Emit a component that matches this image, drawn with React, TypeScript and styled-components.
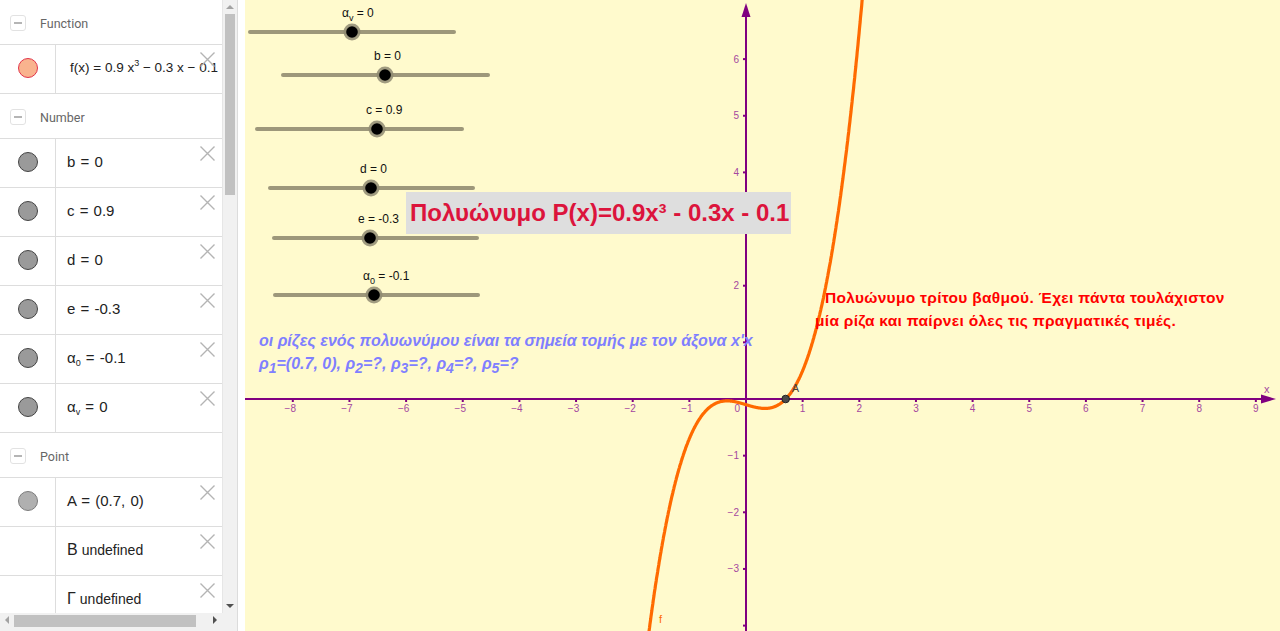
import React from 'react';
import styled, { createGlobalStyle } from 'styled-components';

const U = 56.65;
const OX = 501;
const OY = 399;
const gx = (x: number) => OX + x * U;
const gy = (y: number) => OY - y * U;
const f = (x: number) => 0.9 * x * x * x - 0.3 * x - 0.1;

const curvePath = (() => {
  const pts: string[] = [];
  for (let i = 0; i <= 600; i++) {
    const x = -1.8 + (i * 3.9) / 600;
    const y = gy(f(x));
    if (y < -40 || y > 680) continue;
    pts.push(`${gx(x).toFixed(1)},${y.toFixed(1)}`);
  }
  return 'M' + pts.join(' L');
})();

const sliders = [
  { name: 'α', sub: 'v', value: '0', y: 32, x1: 5, x2: 209, knob: 107, labelX: 97 },
  { name: 'b', value: '0', y: 75, x1: 38, x2: 243, knob: 140, labelX: 129 },
  { name: 'c', value: '0.9', y: 129, x1: 12, x2: 217, knob: 132, labelX: 121 },
  { name: 'd', value: '0', y: 188, x1: 25, x2: 228, knob: 126, labelX: 115 },
  { name: 'e', value: '-0.3', y: 238, x1: 29, x2: 232, knob: 125, labelX: 113 },
  { name: 'α', sub: '0', value: '-0.1', y: 295, x1: 30, x2: 233, knob: 129, labelX: 118 },
];

const numbers = [
  { name: 'b', value: '0' },
  { name: 'c', value: '0.9' },
  { name: 'd', value: '0' },
  { name: 'e', value: '-0.3' },
  { name: 'α', sub: '0', value: '-0.1' },
  { name: 'α', sub: 'v', value: '0' },
];

const GlobalStyle = createGlobalStyle`
  html, body { margin: 0; padding: 0; background: #fff; overflow: hidden; }
  body { font-family: "Liberation Sans", Arial, sans-serif; }
`;

const Page = styled.div`
  display: flex;
  width: 1280px;
  height: 631px;
  overflow: hidden;
`;

const AlgebraPanel = styled.div`
  flex: none;
  width: 237px;
  height: 631px;
  display: grid;
  grid-template-columns: 222px 15px;
  grid-template-rows: 613px 18px;
  border-right: 1px solid #dcdcdc;
`;

const AlgebraList = styled.div`
  overflow: hidden;
`;

const GroupHeader = styled.div`
  height: 44px;
  display: flex;
  align-items: center;
  gap: 14px;
  padding: 2px 0 0 10px;
  box-sizing: border-box;
  font-family: Roboto, "Liberation Sans", sans-serif;
  font-size: 12.5px;
  color: #666;
`;

const Toggle = styled.span`
  width: 14px;
  height: 14px;
  border: 1px solid #e2e2e2;
  border-radius: 3px;
  display: flex;
  align-items: center;
  justify-content: center;
  &::after {
    content: '';
    width: 8px;
    height: 1.5px;
    background: #b5b5b5;
  }
`;

const Items = styled.div`
  border-top: 1px solid #dddddd;
`;

const Row = styled.div`
  position: relative;
  height: 48px;
  display: grid;
  grid-template-columns: 56px 1fr;
  border-bottom: 1px solid #dddddd;
`;

const MarkerCell = styled.div`
  display: flex;
  align-items: center;
  justify-content: center;
  border-right: 1px solid #dddddd;
`;

const Marker = styled.span<{ $fill: string; $border: string }>`
  width: 18px;
  height: 18px;
  margin-top: -2px;
  border-radius: 50%;
  background: ${(p) => p.$fill};
  border: 1px solid ${(p) => p.$border};
`;

const Value = styled.div<{ $size?: number; $indent?: number; $spacing?: number }>`
  padding-left: ${(p) => p.$indent ?? 11}px;
  line-height: 46px;
  white-space: nowrap;
  overflow: hidden;
  font-size: ${(p) => p.$size ?? 15}px;
  color: #222;
  word-spacing: ${(p) => p.$spacing ?? 1}px;
`;

const Sub = styled.sub`
  font-size: 9px;
  vertical-align: -3px;
  line-height: 0;
`;

const Sup = styled.sup`
  font-size: 9px;
  vertical-align: 6px;
  line-height: 0;
`;

const Label = styled.span`
  font-size: 16px;
  margin-right: 4px;
`;

const Undef = styled.span`
  font-size: 14px;
`;

const CloseIcon = styled.svg`
  position: absolute;
  top: 6px;
  right: 6px;
  width: 17px;
  height: 17px;
`;

const VScroll = styled.div`
  display: flex;
  flex-direction: column;
  background: #f1f1f1;
  border-left: 1px solid #e6e6e6;
`;

const ScrollTrack = styled.div<{ $dir: 'v' | 'h' }>`
  flex: 1;
  display: flex;
  flex-direction: ${(p) => (p.$dir === 'v' ? 'column' : 'row')};
  padding: ${(p) => (p.$dir === 'v' ? '0 2px' : '2px 0')};
`;

const Thumb = styled.div<{ $len: number; $dir: 'v' | 'h' }>`
  background: #c1c1c1;
  ${(p) => (p.$dir === 'v' ? `height: ${p.$len}px;` : `width: ${p.$len}px;`)}
  flex: none;
  align-self: stretch;
`;

const ArrowBox = styled.div`
  flex: none;
  width: 14px;
  height: 14px;
  display: flex;
  align-items: center;
  justify-content: center;
`;

const Arrow = styled.span<{ $dir: 'up' | 'down' | 'left' | 'right'; $color: string }>`
  width: 0;
  height: 0;
  ${(p) =>
    p.$dir === 'up'
      ? `border-left: 4px solid transparent; border-right: 4px solid transparent; border-bottom: 4px solid ${p.$color};`
      : p.$dir === 'down'
      ? `border-left: 4px solid transparent; border-right: 4px solid transparent; border-top: 4px solid ${p.$color};`
      : p.$dir === 'left'
      ? `border-top: 4px solid transparent; border-bottom: 4px solid transparent; border-right: 4px solid ${p.$color};`
      : `border-top: 4px solid transparent; border-bottom: 4px solid transparent; border-left: 4px solid ${p.$color};`}
`;

const HScroll = styled.div`
  display: flex;
  align-items: stretch;
  background: #f1f1f1;
  padding-bottom: 2px;
`;

const Corner = styled.div`
  background: #f1f1f1;
`;

const Splitter = styled.div`
  flex: none;
  width: 7px;
  background: #fff;
`;

const Graphics = styled.div`
  position: relative;
  flex: 1;
  height: 631px;
  background: #fffacd;
  overflow: hidden;
  svg.canvas {
    display: block;
  }
`;

const TitleBox = styled.div`
  position: absolute;
  left: 161px;
  top: 192px;
  width: 385px;
  height: 42px;
  box-sizing: border-box;
  padding-left: 4px;
  background: #dedede;
  color: #dc143c;
  font-weight: bold;
  font-size: 24px;
  line-height: 42px;
  white-space: nowrap;
`;

const RedNote = styled.div`
  position: absolute;
  left: 570px;
  top: 286px;
  color: #ff0000;
  font-weight: bold;
  font-size: 15.5px;
  letter-spacing: 0.3px;
  line-height: 23px;
  text-indent: 10px;
  white-space: nowrap;
`;

const BlueNote = styled.div`
  position: absolute;
  left: 14px;
  top: 329px;
  color: #7f7fff;
  font-weight: bold;
  font-style: italic;
  font-size: 16px;
  line-height: 23px;
  white-space: nowrap;
`;

const NoteSub = styled.sub`
  font-size: 14px;
  vertical-align: -4px;
  line-height: 0;
`;

const Close = () => (
  <CloseIcon viewBox="0 0 17 17">
    <path d="M1.5 1.5 L15.5 15.5 M15.5 1.5 L1.5 15.5" stroke="#b4b4b4" strokeWidth="1.4" fill="none" />
  </CloseIcon>
);

const Group = ({ title, children }: { title: string; children: React.ReactNode }) => (
  <>
    <GroupHeader>
      <Toggle />
      {title}
    </GroupHeader>
    <Items>{children}</Items>
  </>
);

const AXIS = '#800080';
const TICK_LABEL = '#a4479f';

const xTicks = [-8, -7, -6, -5, -4, -3, -2, -1, 1, 2, 3, 4, 5, 6, 7, 8, 9];
const yTicks = [6, 5, 4, 3, 2, 1, -1, -2, -3, -4];
const yLabels = [6, 5, 4, 2, -1, -2, -3];
const num = (n: number) => (n < 0 ? '\u2212' + Math.abs(n) : String(n));

const GraphCanvas = () => (
  <svg className="canvas" width="1035" height="631" viewBox="0 0 1035 631">
    {/* axes */}
    <line x1="0" y1={OY} x2="1020" y2={OY} stroke={AXIS} strokeWidth="2" />
    <polygon points={`1031,${OY} 1016,${OY - 4.5} 1016,${OY + 4.5}`} fill={AXIS} />
    <line x1={OX} y1="14" x2={OX} y2="631" stroke={AXIS} strokeWidth="2" />
    <polygon points={`${OX},3 ${OX - 4.5},17 ${OX + 4.5},17`} fill={AXIS} />
    {xTicks.map((t) => (
      <g key={t}>
        <line x1={gx(t)} y1={OY} x2={gx(t)} y2={OY + 3} stroke={AXIS} strokeWidth="2" />
        <text x={gx(t) + (t < 0 ? -2.5 : 0)} y={OY + 13} fontSize="10" fill={TICK_LABEL} textAnchor="middle" fontFamily="Liberation Sans, Arial, sans-serif">
          {num(t)}
        </text>
      </g>
    ))}
    <text x={OX - 6} y={OY + 13} fontSize="10" fill={TICK_LABEL} textAnchor="end" fontFamily="Liberation Sans, Arial, sans-serif">0</text>
    <text x="1019" y="393" fontSize="11" fill={TICK_LABEL} fontFamily="Liberation Sans, Arial, sans-serif">x</text>
    {yTicks.map((t) => (
      <line key={t} x1={OX - 3} y1={gy(t)} x2={OX} y2={gy(t)} stroke={AXIS} strokeWidth="2" />
    ))}
    {yLabels.map((t) => (
      <text key={t} x={OX - 7} y={gy(t) + 3.5} fontSize="10" fill={TICK_LABEL} textAnchor="end" fontFamily="Liberation Sans, Arial, sans-serif">
        {num(t)}
      </text>
    ))}

    {/* function graph */}
    <path d={curvePath} stroke="#ff6a00" strokeWidth="3.2" fill="none" strokeLinejoin="round" />
    <text x="414" y="623" fontSize="11" fill="#ff6a00" fontFamily="Liberation Sans, Arial, sans-serif">f</text>

    {/* point A */}
    <circle cx={gx(0.7)} cy={OY} r="3.8" fill="#4a4a4a" stroke="#222" strokeWidth="1" />
    <text x={gx(0.7) + 6} y="392" fontSize="11" fill="#444" fontFamily="Liberation Sans, Arial, sans-serif">A</text>

    {/* sliders */}
    {sliders.map((s, i) => (
      <g key={i}>
        <text x={s.labelX} y={s.y - 15} fontSize="12" fill="#111" fontFamily="Liberation Sans, Arial, sans-serif">
          <tspan>{s.name}</tspan>
          {s.sub && (
            <tspan dy="4" fontSize="9">
              {s.sub}
            </tspan>
          )}
          <tspan dy={s.sub ? -4 : 0}>{` = ${s.value}`}</tspan>
        </text>
        <line x1={s.x1} y1={s.y} x2={s.x2} y2={s.y} stroke="#9d977a" strokeWidth="4" strokeLinecap="round" />
        <circle cx={s.knob} cy={s.y} r="8.5" fill="#8f8a72" opacity="0.85" />
        <circle cx={s.knob} cy={s.y} r="5.8" fill="#000" />
      </g>
    ))}
  </svg>
);

export default function App() {
  return (
    <>
      <GlobalStyle />
      <Page>
        <AlgebraPanel>
          <AlgebraList>
            <Group title="Function">
              <Row>
                <MarkerCell>
                  <Marker $fill="#f9b38e" $border="#e2344a" />
                </MarkerCell>
                <Value $size={13.5} $indent={14} $spacing={0}>
                  f(x) = 0.9 x<Sup>3</Sup> − 0.3 x − 0.1
                </Value>
                <Close />
              </Row>
            </Group>
            <Group title="Number">
              {numbers.map((n, i) => (
                <Row key={i}>
                  <MarkerCell>
                    <Marker $fill="#9a9a9a" $border="#444" />
                  </MarkerCell>
                  <Value>
                    {n.name}
                    {n.sub && <Sub>{n.sub}</Sub>} = {n.value}
                  </Value>
                  <Close />
                </Row>
              ))}
            </Group>
            <Group title="Point">
              <Row>
                <MarkerCell>
                  <Marker $fill="#b0b0b0" $border="#7c7c7c" />
                </MarkerCell>
                <Value>A = (0.7, 0)</Value>
                <Close />
              </Row>
              <Row>
                <MarkerCell />
                <Value>
                  <Label>B</Label>
                  <Undef>undefined</Undef>
                </Value>
                <Close />
              </Row>
              <Row>
                <MarkerCell />
                <Value>
                  <Label>Γ</Label>
                  <Undef>undefined</Undef>
                </Value>
                <Close />
              </Row>
            </Group>
          </AlgebraList>
          <VScroll>
            <ArrowBox>
              <Arrow $dir="up" $color="#a3a3a3" />
            </ArrowBox>
            <ScrollTrack $dir="v">
              <Thumb $dir="v" $len={181} />
            </ScrollTrack>
            <ArrowBox>
              <Arrow $dir="down" $color="#505050" />
            </ArrowBox>
          </VScroll>
          <HScroll>
            <ArrowBox>
              <Arrow $dir="left" $color="#a3a3a3" />
            </ArrowBox>
            <ScrollTrack $dir="h">
              <Thumb $dir="h" $len={182} />
            </ScrollTrack>
            <ArrowBox>
              <Arrow $dir="right" $color="#505050" />
            </ArrowBox>
          </HScroll>
          <Corner />
        </AlgebraPanel>
        <Splitter />
        <Graphics>
          <GraphCanvas />
          <TitleBox>Πολυώνυμο P(x)=0.9x³ - 0.3x - 0.1</TitleBox>
          <BlueNote>
            οι ρίζες ενός πολυωνύμου είναι τα σημεία τομής με τον άξονα x'x
            <br />
            ρ<NoteSub>1</NoteSub>=(0.7, 0), ρ<NoteSub>2</NoteSub>=?, ρ<NoteSub>3</NoteSub>=?, ρ
            <NoteSub>4</NoteSub>=?, ρ<NoteSub>5</NoteSub>=?
          </BlueNote>
          <RedNote>
            Πολυώνυμο τρίτου βαθμού. Έχει πάντα τουλάχιστον
            <br />
            μία ρίζα και παίρνει όλες τις πραγματικές τιμές.
          </RedNote>
        </Graphics>
      </Page>
    </>
  );
}
